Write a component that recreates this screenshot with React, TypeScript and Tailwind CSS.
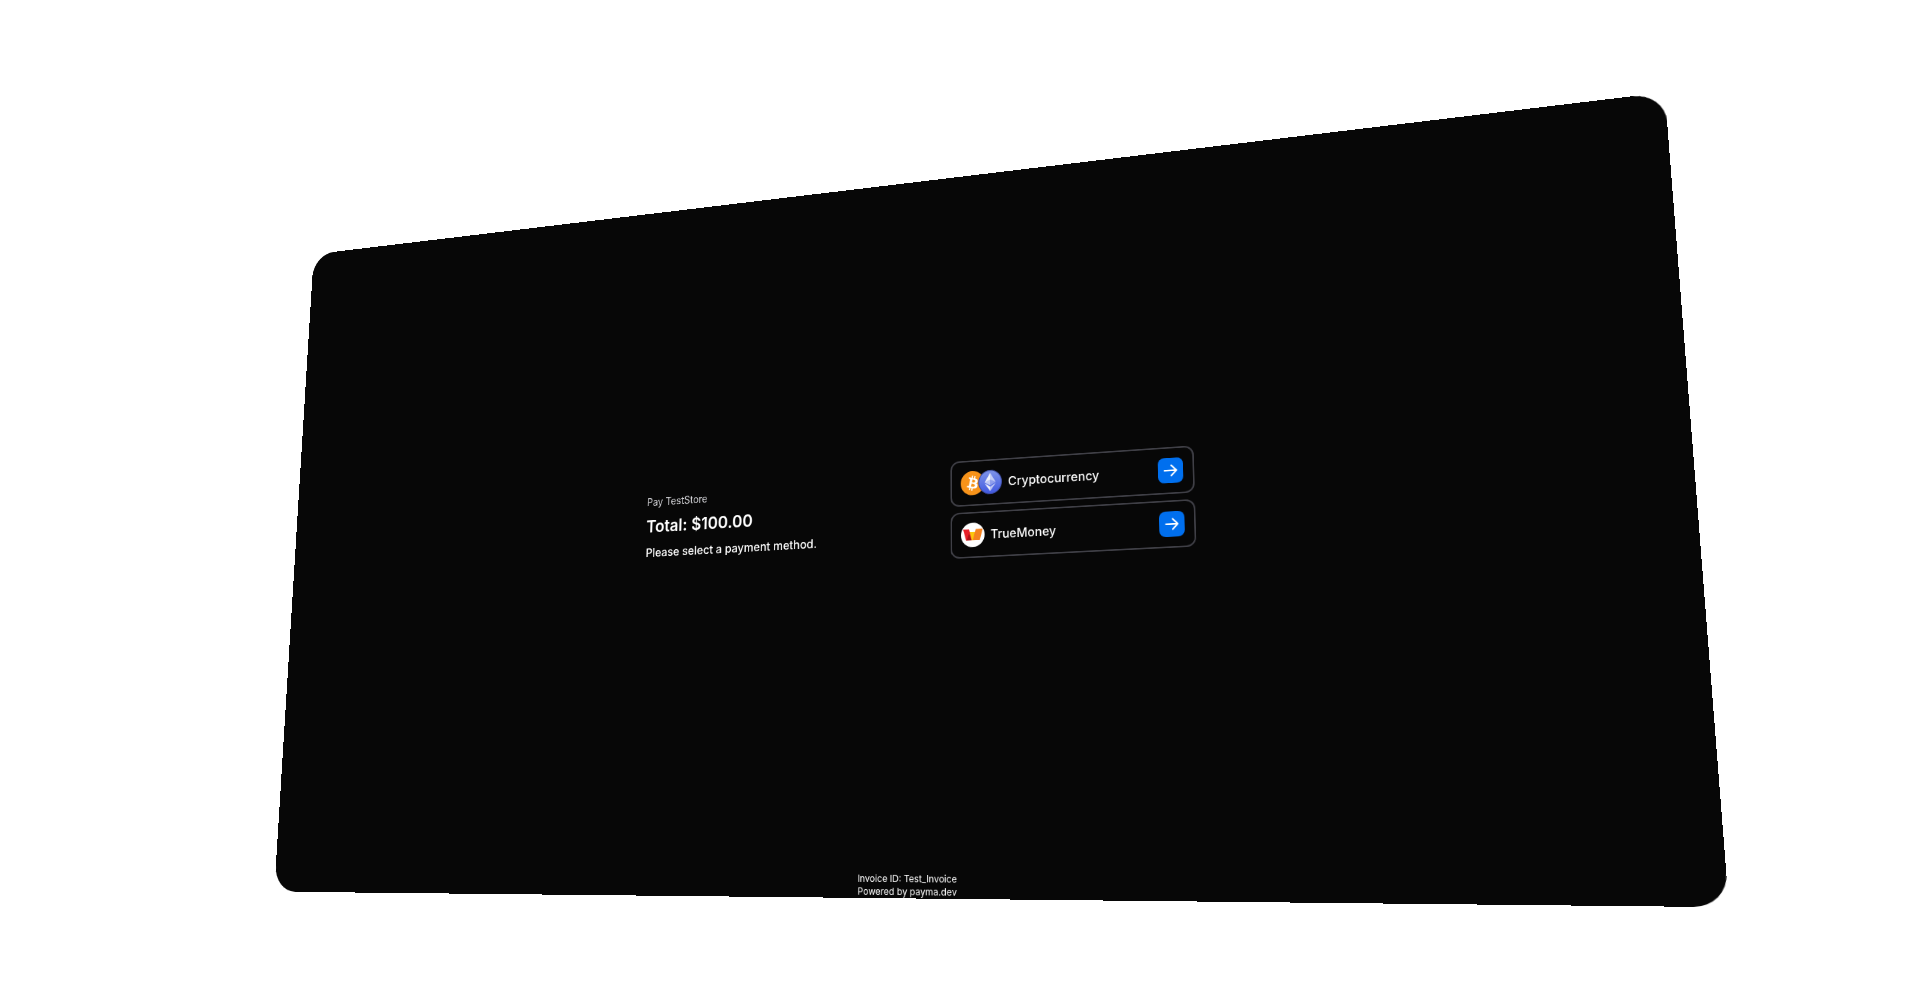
import { useId } from "react";
import type { ReactNode } from "react";

function BitcoinIcon() {
  return (
    <svg viewBox="0 0 32 32" className="size-8 shrink-0" aria-hidden="true">
      <circle cx="16" cy="16" r="16" fill="#f7931a" />
      <path
        fill="#fff"
        d="M23.189 14.02c.314-2.096-1.283-3.223-3.465-3.975l.708-2.84-1.728-.43-.69 2.765c-.454-.114-.92-.22-1.385-.326l.695-2.783L15.596 6l-.708 2.839c-.376-.086-.746-.17-1.104-.26l.002-.009-2.384-.595-.46 1.846s1.283.294 1.256.312c.7.175.826.638.805 1.006l-.806 3.235c.048.012.11.03.18.057l-.183-.045-1.13 4.532c-.086.212-.303.531-.793.41.018.025-1.256-.313-1.256-.313l-.858 1.978 2.25.561c.418.105.828.215 1.231.318l-.715 2.872 1.727.43.708-2.84c.472.127.93.245 1.378.357l-.706 2.828 1.728.43.715-2.866c2.948.558 5.164.333 6.097-2.333.752-2.146-.037-3.385-1.588-4.192 1.13-.26 1.98-1.003 2.207-2.538zm-3.95 5.538c-.533 2.147-4.148.986-5.32.695l.95-3.805c1.172.293 4.929.872 4.37 3.11zm.535-5.569c-.487 1.953-3.495.96-4.47.717l.86-3.45c.975.243 4.118.696 3.61 2.733z"
      />
    </svg>
  );
}

function EthereumIcon() {
  const gradient = useId();
  return (
    <svg viewBox="0 0 32 32" className="-ml-2 size-8 shrink-0" aria-hidden="true">
      <defs>
        <linearGradient id={gradient} x1="0" y1="0" x2="0" y2="1">
          <stop offset="0" stopColor="#7f95ea" />
          <stop offset="1" stopColor="#4058e0" />
        </linearGradient>
      </defs>
      <circle cx="16" cy="16" r="15.4" fill={`url(#${gradient})`} stroke="#3c4a9c" strokeWidth="1.2" />
      <g fill="#fff">
        <path fillOpacity=".6" d="M16 4v8.87l7.5 3.35z" />
        <path fillOpacity=".9" d="M16 4L8.500 16.220l7.500-3.350z" />
        <path fillOpacity=".6" d="M16 21.970v6.030l7.500-10.380z" />
        <path fillOpacity=".9" d="M16 28v-6.030l-7.500-4.350z" />
        <path fillOpacity=".3" d="M16 20.570l7.500-4.350-7.500-3.350z" />
        <path fillOpacity=".6" d="M8.500 16.220l7.500 4.350v-7.700z" />
      </g>
    </svg>
  );
}

function TrueMoneyIcon() {
  return (
    <svg viewBox="0 0 32 32" className="size-8 shrink-0" aria-hidden="true">
      <circle cx="16" cy="16" r="16" fill="#fff" />
      <path fill="#fdc70c" d="M11.500 12h9L17.500 23H14z" />
      <path fill="#e8202a" d="M3 8.500h8L14.500 23H7z" />
      <path fill="#b01117" d="M7.500 23L11 14l3.500 9z" />
      <path fill="#f58220" d="M20 8.500h9.500L25.500 23H16z" />
    </svg>
  );
}

function MethodCard({ name, icons }: { name: string; icons: ReactNode }) {
  return (
    <li className="flex items-center gap-2 rounded-xl border-2 border-[#3f3f46] p-3">
      <span className="flex">{icons}</span>
      <span className="grow text-base font-medium">{name}</span>
      <button
        type="button"
        aria-label={`Pay with ${name}`}
        className="flex size-8 shrink-0 items-center justify-center rounded-lg bg-[#006fee] text-white"
      >
        <svg
          viewBox="0 0 24 24"
          className="size-6"
          fill="none"
          stroke="currentColor"
          strokeWidth="2"
          strokeLinecap="round"
          strokeLinejoin="round"
          aria-hidden="true"
        >
          <path d="M4.500 12h15M13 5.500l6.500 6.500-6.500 6.500" />
        </svg>
      </button>
    </li>
  );
}

export default function App() {
  return (
    <div className="flex h-screen items-center justify-center overflow-hidden bg-white font-['Inter',sans-serif]">
      <div className="flex h-[94vh] w-full flex-col overflow-hidden rounded-[36px] bg-[#070707] text-white [transform:perspective(1765px)_translate(-49px,25px)_rotateX(10deg)_rotateY(-18deg)_rotateZ(-0.25deg)_scale(0.765)]">
        <main className="flex grow items-center justify-center">
          <div className="flex w-full max-w-[760px] items-center justify-between">
            <section className="flex flex-col gap-1">
              <p className="text-sm text-[#d4d4d8]">Pay TestStore</p>
              <h1 className="text-[23px]/10 font-semibold">Total: $100.00</h1>
              <p className="text-base font-medium">Please select a payment method.</p>
            </section>
            <ul className="flex w-80 flex-col gap-2">
              <MethodCard
                name="Cryptocurrency"
                icons={
                  <>
                    <BitcoinIcon />
                    <EthereumIcon />
                  </>
                }
              />
              <MethodCard name="TrueMoney" icons={<TrueMoneyIcon />} />
            </ul>
          </div>
        </main>
        <footer className="pt-2 text-center text-xs">
          <p>Invoice ID: Test_Invoice</p>
          <p>Powered by payma.dev</p>
        </footer>
      </div>
    </div>
  );
}
